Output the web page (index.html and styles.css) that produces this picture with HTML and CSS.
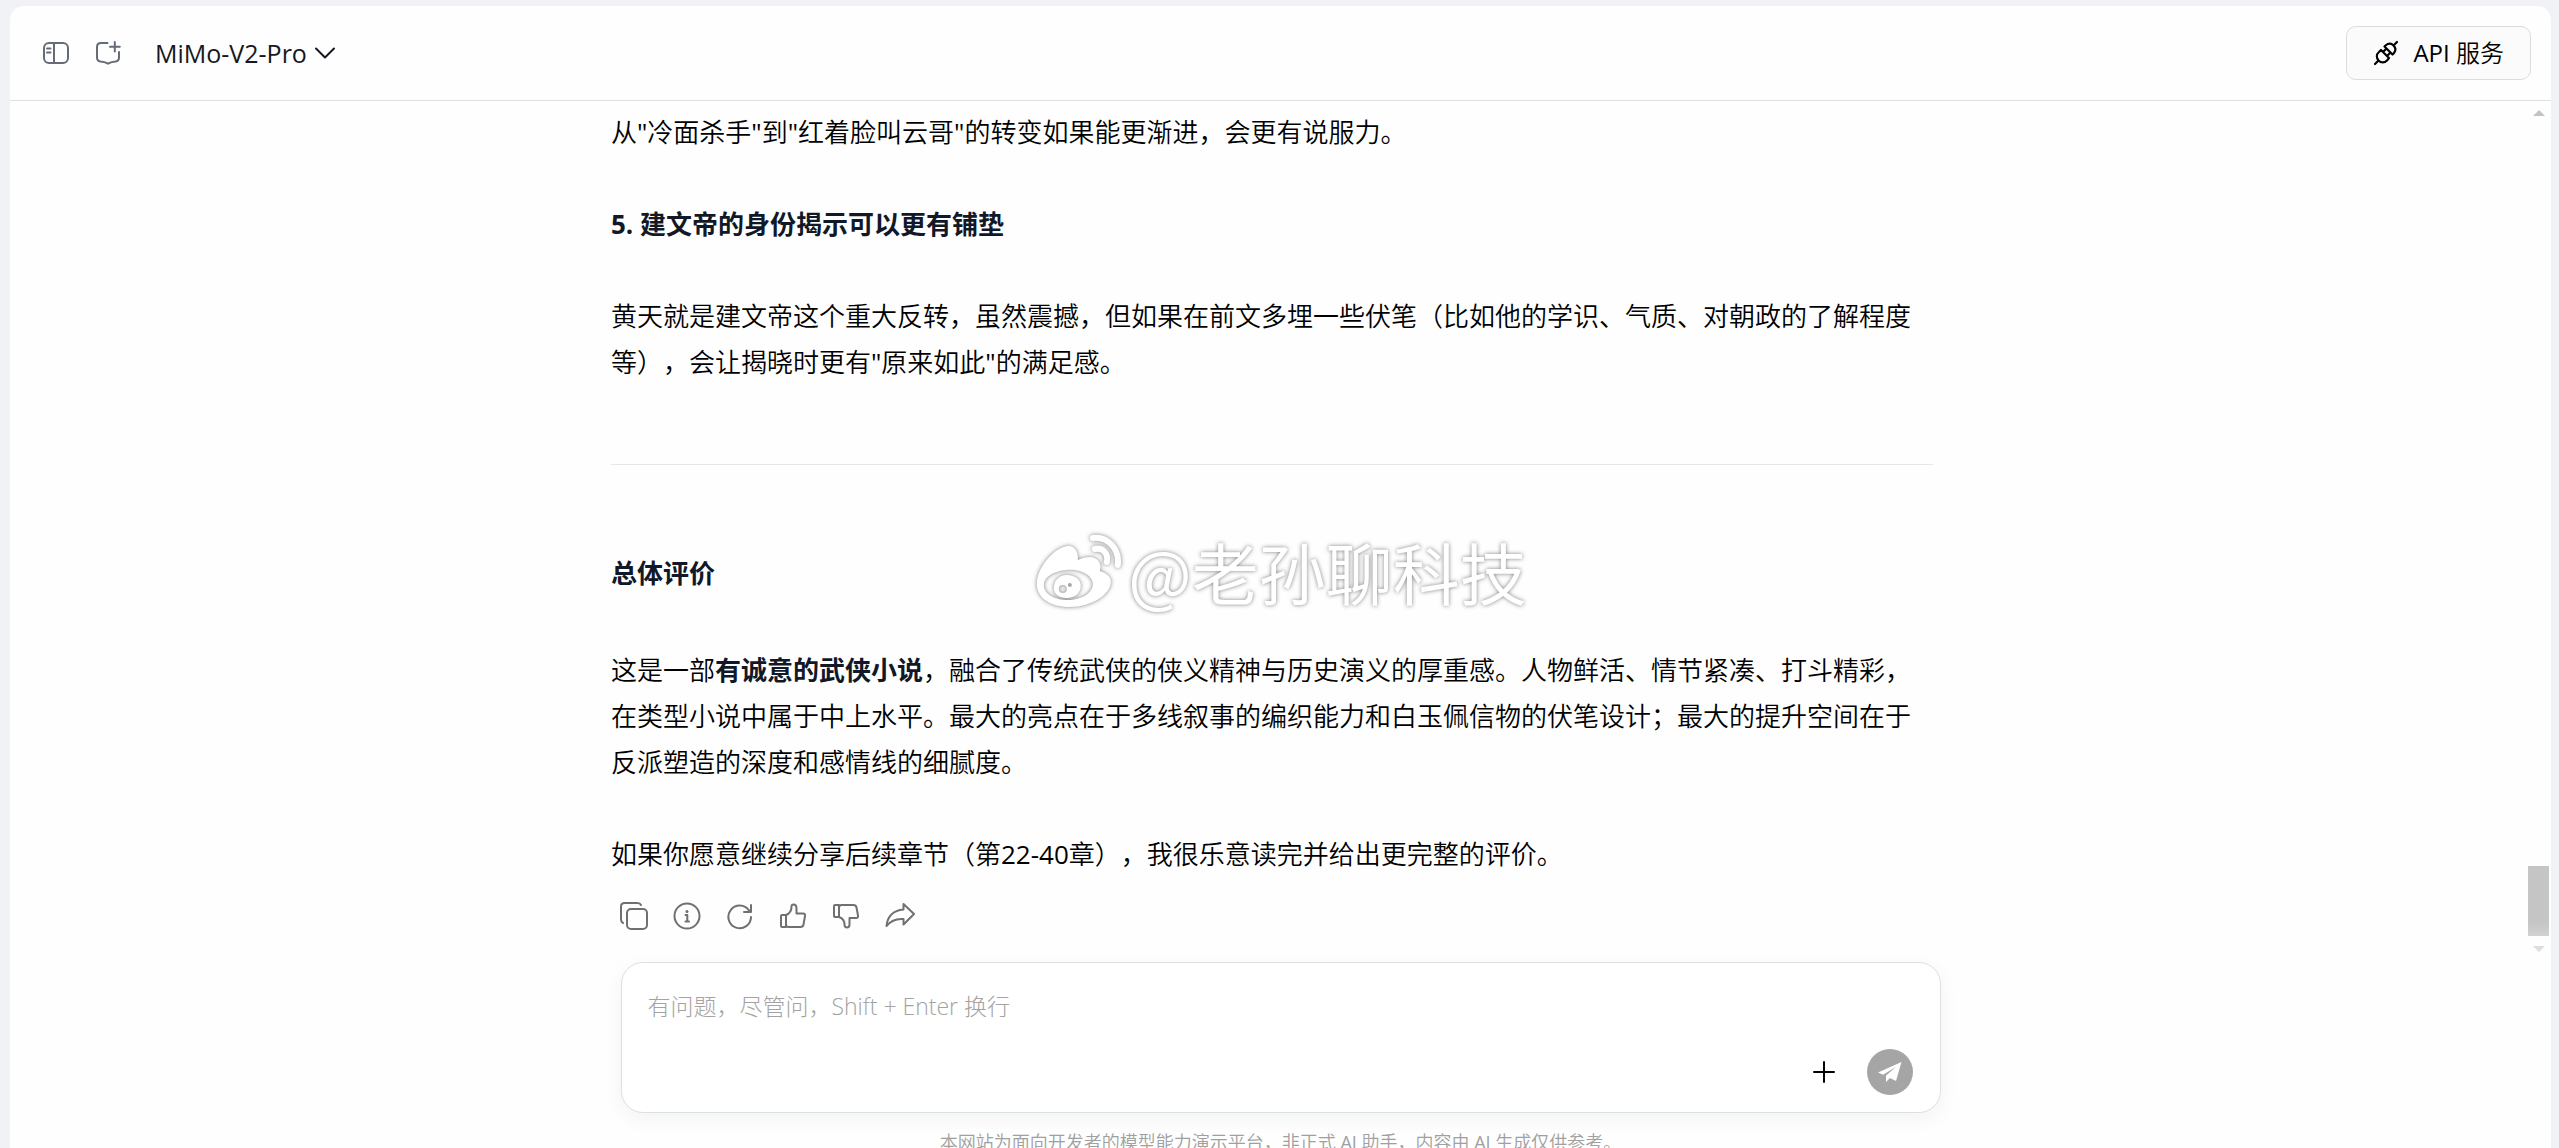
FILE: index.html
```
<!DOCTYPE html>
<html lang="zh-CN">
<head>
<meta charset="utf-8">
<title>MiMo-V2-Pro</title>
<link rel="stylesheet" href="styles.css">
</head>
<body>
<div class="shell">
  <header class="topbar">
    <button class="icon-button" type="button" aria-label="侧边栏">
      <svg width="26" height="22" viewBox="0 0 26 22" fill="none" stroke="#666c76" stroke-width="2" stroke-linecap="round"><rect x="1" y="1" width="24" height="20" rx="5"/><path d="M11 1v20M4 6.500h3.500M4 10.500h3.500"/></svg>
    </button>
    <button class="icon-button" type="button" aria-label="新对话">
      <svg width="26" height="24" viewBox="0 0 26 24" fill="none" stroke="#666c76" stroke-width="2" stroke-linecap="round" stroke-linejoin="round"><path d="M12.500 2H6Q2 2 2 6V16.500Q2 20 5.500 20.500Q9.500 20.700 13 22.700Q16.500 20.700 20.500 20.500Q24 20 24 16.500V11M19.800 1v9.500M15 5.800h9.800"/></svg>
    </button>
    <button class="model-select" type="button">
      <span>MiMo-V2-Pro</span>
      <svg width="20" height="12" viewBox="0 0 20 12" fill="none" stroke="#16181d" stroke-width="2" stroke-linecap="round" stroke-linejoin="round"><path d="M1 1.500l9 9 9-9"/></svg>
    </button>
    <button class="api-button" type="button">
      <svg width="26" height="26" viewBox="0 0 26 26" fill="none" stroke="#000" stroke-width="2.200" stroke-linecap="round" stroke-linejoin="round"><path d="M2 24l3.500-3.500M20.500 5.500L24 2M5.500 20.500c-2-2.500-2.500-6 .5-8.500l2-2 8 8-2 2.500c-2.500 2.500-6 2.500-8.500 0zM20.500 5.500c-2.500-2.500-5.500-2-8 0L11.500 6.500l8 8 1.500-1.500c2-2.500 2-5-.5-7.500zM10 12l2.500-2.500M14 16l2.500-2.500"/></svg>
      <span>API 服务</span>
    </button>
  </header>

  <main class="chat">
    <article class="message">
      <p>从"冷面杀手"到"红着脸叫云哥"的转变如果能更渐进，会更有说服力。</p>
      <h3>5. 建文帝的身份揭示可以更有铺垫</h3>
      <p>黄天就是建文帝这个重大反转，虽然震撼，但如果在前文多埋一些伏笔（比如他的学识、气质、对朝政的了解程度等），会让揭晓时更有"原来如此"的满足感。</p>
      <hr>
      <h2>总体评价</h2>
      <p>这是一部<strong>有诚意的武侠小说</strong>，融合了传统武侠的侠义精神与历史演义的厚重感。人物鲜活、情节紧凑、打斗精彩，在类型小说中属于中上水平。最大的亮点在于多线叙事的编织能力和白玉佩信物的伏笔设计；最大的提升空间在于反派塑造的深度和感情线的细腻度。</p>
      <p>如果你愿意继续分享后续章节（第22-40章），我很乐意读完并给出更完整的评价。</p>
      <div class="actions">
        <button class="icon-button" type="button" aria-label="复制"><svg width="28" height="28" viewBox="0 0 28 28"><rect x="7" y="7" width="20" height="20" rx="4"/><path d="M3 21Q1 20 1 17.500V4.500Q1 1 4.500 1H17.500Q20 1 21 3"/></svg></button>
        <button class="icon-button" type="button" aria-label="信息"><svg width="28" height="28" viewBox="0 0 28 28"><circle cx="14" cy="14" r="12.500"/><path d="M12.500 13H14.300V19.500M12.500 19.500H16"/><circle class="dot" cx="14" cy="9.500" r="1.500"/></svg></button>
        <button class="icon-button" type="button" aria-label="重新生成"><svg width="28" height="28" viewBox="0 0 28 28"><path d="M25 15A11.300 11.300 0 1 1 23 8.500L24.500 10M25 3V10H18"/></svg></button>
        <button class="icon-button" type="button" aria-label="赞"><svg width="28" height="28" viewBox="0 0 28 28"><path d="M7 13H3Q2 13 2 14V24Q2 25 3 25H7M7 13V25M7 13Q12.500 11 12.500 4.500Q12.500 2.500 14.500 2.500Q17.500 2.500 17.500 6.500V11.500H24Q26.500 11.500 26 14L24.500 22.500Q24 25 21.500 25H9.500Q7 25 7 22.500z"/></svg></button>
        <button class="icon-button" type="button" aria-label="踩"><svg width="28" height="28" viewBox="0 0 28 28"><path d="M7 15H3Q2 15 2 14V4Q2 3 3 3H7M7 3V15M7 15Q12.500 17 12.500 22.500Q12.500 25.500 15 25.500Q17.500 25.500 17.500 22.500V16H24Q26.500 16 26 13.500L24.500 5.500Q24 3 21.500 3H9.500Q7 3 7 5.500z"/></svg></button>
        <button class="icon-button" type="button" aria-label="分享"><svg width="30" height="28" viewBox="0 0 30 28"><path d="M18.500 2L29 12 18.500 22.500V17Q8 16 1.500 24Q3 9 18.500 7.500z"/></svg></button>
      </div>
    </article>
    <div class="scrollbar" aria-hidden="true">
      <svg class="arrow" width="12" height="6" viewBox="0 0 12 6"><path d="M6 0l6 6H0z" fill="#c3c3c3"/></svg>
      <div class="thumb"></div>
      <svg class="arrow" width="12" height="6" viewBox="0 0 12 6"><path d="M6 6l6-6H0z" fill="#dedede"/></svg>
    </div>
  </main>

  <form class="composer">
    <textarea rows="1" aria-label="消息" placeholder="有问题，尽管问，Shift + Enter 换行"></textarea>
    <div class="composer-tools">
      <button class="icon-button" type="button" aria-label="添加附件"><svg width="24" height="24" viewBox="0 0 24 24" fill="none" stroke="#000" stroke-width="2" stroke-linecap="round"><path d="M12 2v20M2 12h20"/></svg></button>
      <button class="send" type="button" aria-label="发送"><svg width="24" height="22" viewBox="0 0 24 22" fill="#fff"><path d="M23.500 1L0 11.500l5 2.300L18 6 8 14.500V21l4-4 6 3z"/></svg></button>
    </div>
  </form>
  <footer class="notice">本网站为面向开发者的模型能力演示平台，非正式 AI 助手，内容由 AI 生成仅供参考。</footer>
</div>

<div class="watermark">
  <svg width="90" height="80" viewBox="0 0 90 80" fill="#fff"><path fill-rule="evenodd" d="M35 12C22 13 4 33 4 50C4 64 18 73 37 73C59 73 78 60 78 48C78 41 72 39 67 37C69 32 67 24 58 23C53 23 49 24 45 26C46 19 42 11 35 12zM33 36C47 34 60 41 60 50C60 59 49 66 35 66C22 66 11 60 11 51C11 43 21 37 33 36z"/><path fill-rule="evenodd" d="M34 41C43 41 48 46 48 52C48 59 42 64 34 64C26 64 21 60 21 54C21 47 26 41 34 41zM30 51A4 4 0 1 0 30 59A4 4 0 1 0 30 51zM37 49A2 2 0 1 0 37 53A2 2 0 1 0 37 49z"/><path d="M60 4C75 2 87 15 85 31M62 15C70 13 76 20 74 28" fill="none" stroke="#fff" stroke-width="6" stroke-linecap="round"/></svg>
  <span>@老孙聊科技</span>
</div>
</body>
</html>
```
FILE: styles.css
```
* {
  box-sizing: border-box;
}

body {
  position: relative;
  height: 100vh;
  margin: 0;
  padding: 6px 8px 0 10px;
  overflow: hidden;
  background: #f1f2f5;
  color: #000;
  font-family: "Open Sans", "Noto Sans CJK SC DemiLight", "Noto Sans CJK SC", sans-serif;
  font-size: 26px;
  line-height: 46px;
  text-spacing-trim: space-all;
}

button {
  padding: 0;
  border: 0;
  background: none;
  color: inherit;
  font: inherit;
  cursor: pointer;
}

svg {
  display: block;
  flex: none;
}

.shell {
  display: flex;
  flex-direction: column;
  min-height: 100%;
  border-radius: 14px 14px 0 0;
  background: #fefefe;
}

.topbar {
  display: flex;
  align-items: center;
  gap: 26px;
  height: 95px;
  padding: 0 20px 0 33px;
  border-bottom: 1px solid #dfe0e2;
  font-size: 24px;
}

.model-select {
  display: flex;
  align-items: center;
  gap: 8px;
  margin-left: 8px;
  color: #16181d;
  font-size: 25px;
}

.api-button {
  display: flex;
  align-items: center;
  gap: 14px;
  height: 54px;
  margin-left: auto;
  padding: 0 26px;
  border: 1px solid #dcdcde;
  border-radius: 10px;
  background: #fbfbfb;
}

.chat {
  display: flex;
}

.message {
  flex: 1;
  max-width: 1322px;
  margin: 0 auto;
  padding: 8px 0 22px;
}

.chat::before {
  content: "";
  width: 8px;
}

.message p,
.message h2,
.message h3 {
  margin: 0 0 46px;
}

.message h2,
.message h3,
.message strong {
  color: #111827;
  font-family: "Open Sans", "Noto Sans CJK SC", sans-serif;
  font-size: 26px;
  font-weight: 700;
}

.message hr {
  height: 1px;
  margin: 79px 0 85px;
  border: 0;
  background: #e5e6e8;
}

.message h2 {
  margin-bottom: 51px;
}

.actions {
  display: flex;
  align-items: center;
  gap: 25px;
  margin-top: -21px;
  padding: 0 9px;
}

.actions svg {
  fill: none;
  stroke: #707070;
  stroke-width: 2;
  stroke-linecap: round;
  stroke-linejoin: round;
}

.actions .dot {
  fill: #707070;
  stroke: none;
}

.scrollbar {
  display: flex;
  flex-direction: column;
  align-items: center;
  width: 25px;
  padding: 9px 0 0;
}

.thumb {
  width: 21px;
  height: 70px;
  margin: auto 0 10px;
  background: linear-gradient(#c5c5c5 80%, #d2d2d2);
}

.composer {
  width: 100%;
  max-width: 1320px;
  margin: 10px auto 0;
  padding: 20px 27px 17px 26px;
  border: 1px solid #dedfe0;
  border-radius: 22px;
  background: #fff;
  box-shadow: 0 6px 20px rgba(20, 40, 40, 0.05);
}

.composer textarea {
  display: block;
  width: 100%;
  height: 46px;
  padding: 0;
  border: 0;
  outline: 0;
  resize: none;
  background: none;
  color: #000;
  font: inherit;
  font-size: 23px;
  line-height: 46px;
}

.composer textarea::placeholder {
  color: #a3a3a3;
  font-family: "Open Sans", "Noto Sans CJK SC", sans-serif;
  font-weight: 300;
}

.composer-tools {
  display: flex;
  align-items: center;
  justify-content: flex-end;
  gap: 31px;
  padding-top: 20px;
}

.send {
  display: flex;
  align-items: center;
  justify-content: center;
  width: 46px;
  height: 46px;
  border-radius: 50%;
  background: #a5a5a5;
}

.notice {
  padding-top: 16px;
  color: #a0a0a0;
  font-size: 18px;
  line-height: 26px;
  text-align: center;
}

.watermark {
  position: absolute;
  top: 50%;
  left: 50%;
  display: flex;
  align-items: flex-start;
  gap: 6px;
  transform: translate(-50%, -50%);
  color: #fff;
  font-family: "Noto Sans CJK SC", sans-serif;
  font-size: 67px;
  font-weight: 400;
  line-height: 74px;
  white-space: nowrap;
  filter: drop-shadow(0 0 2px rgba(0, 0, 0, 0.5));
  pointer-events: none;
}
```
